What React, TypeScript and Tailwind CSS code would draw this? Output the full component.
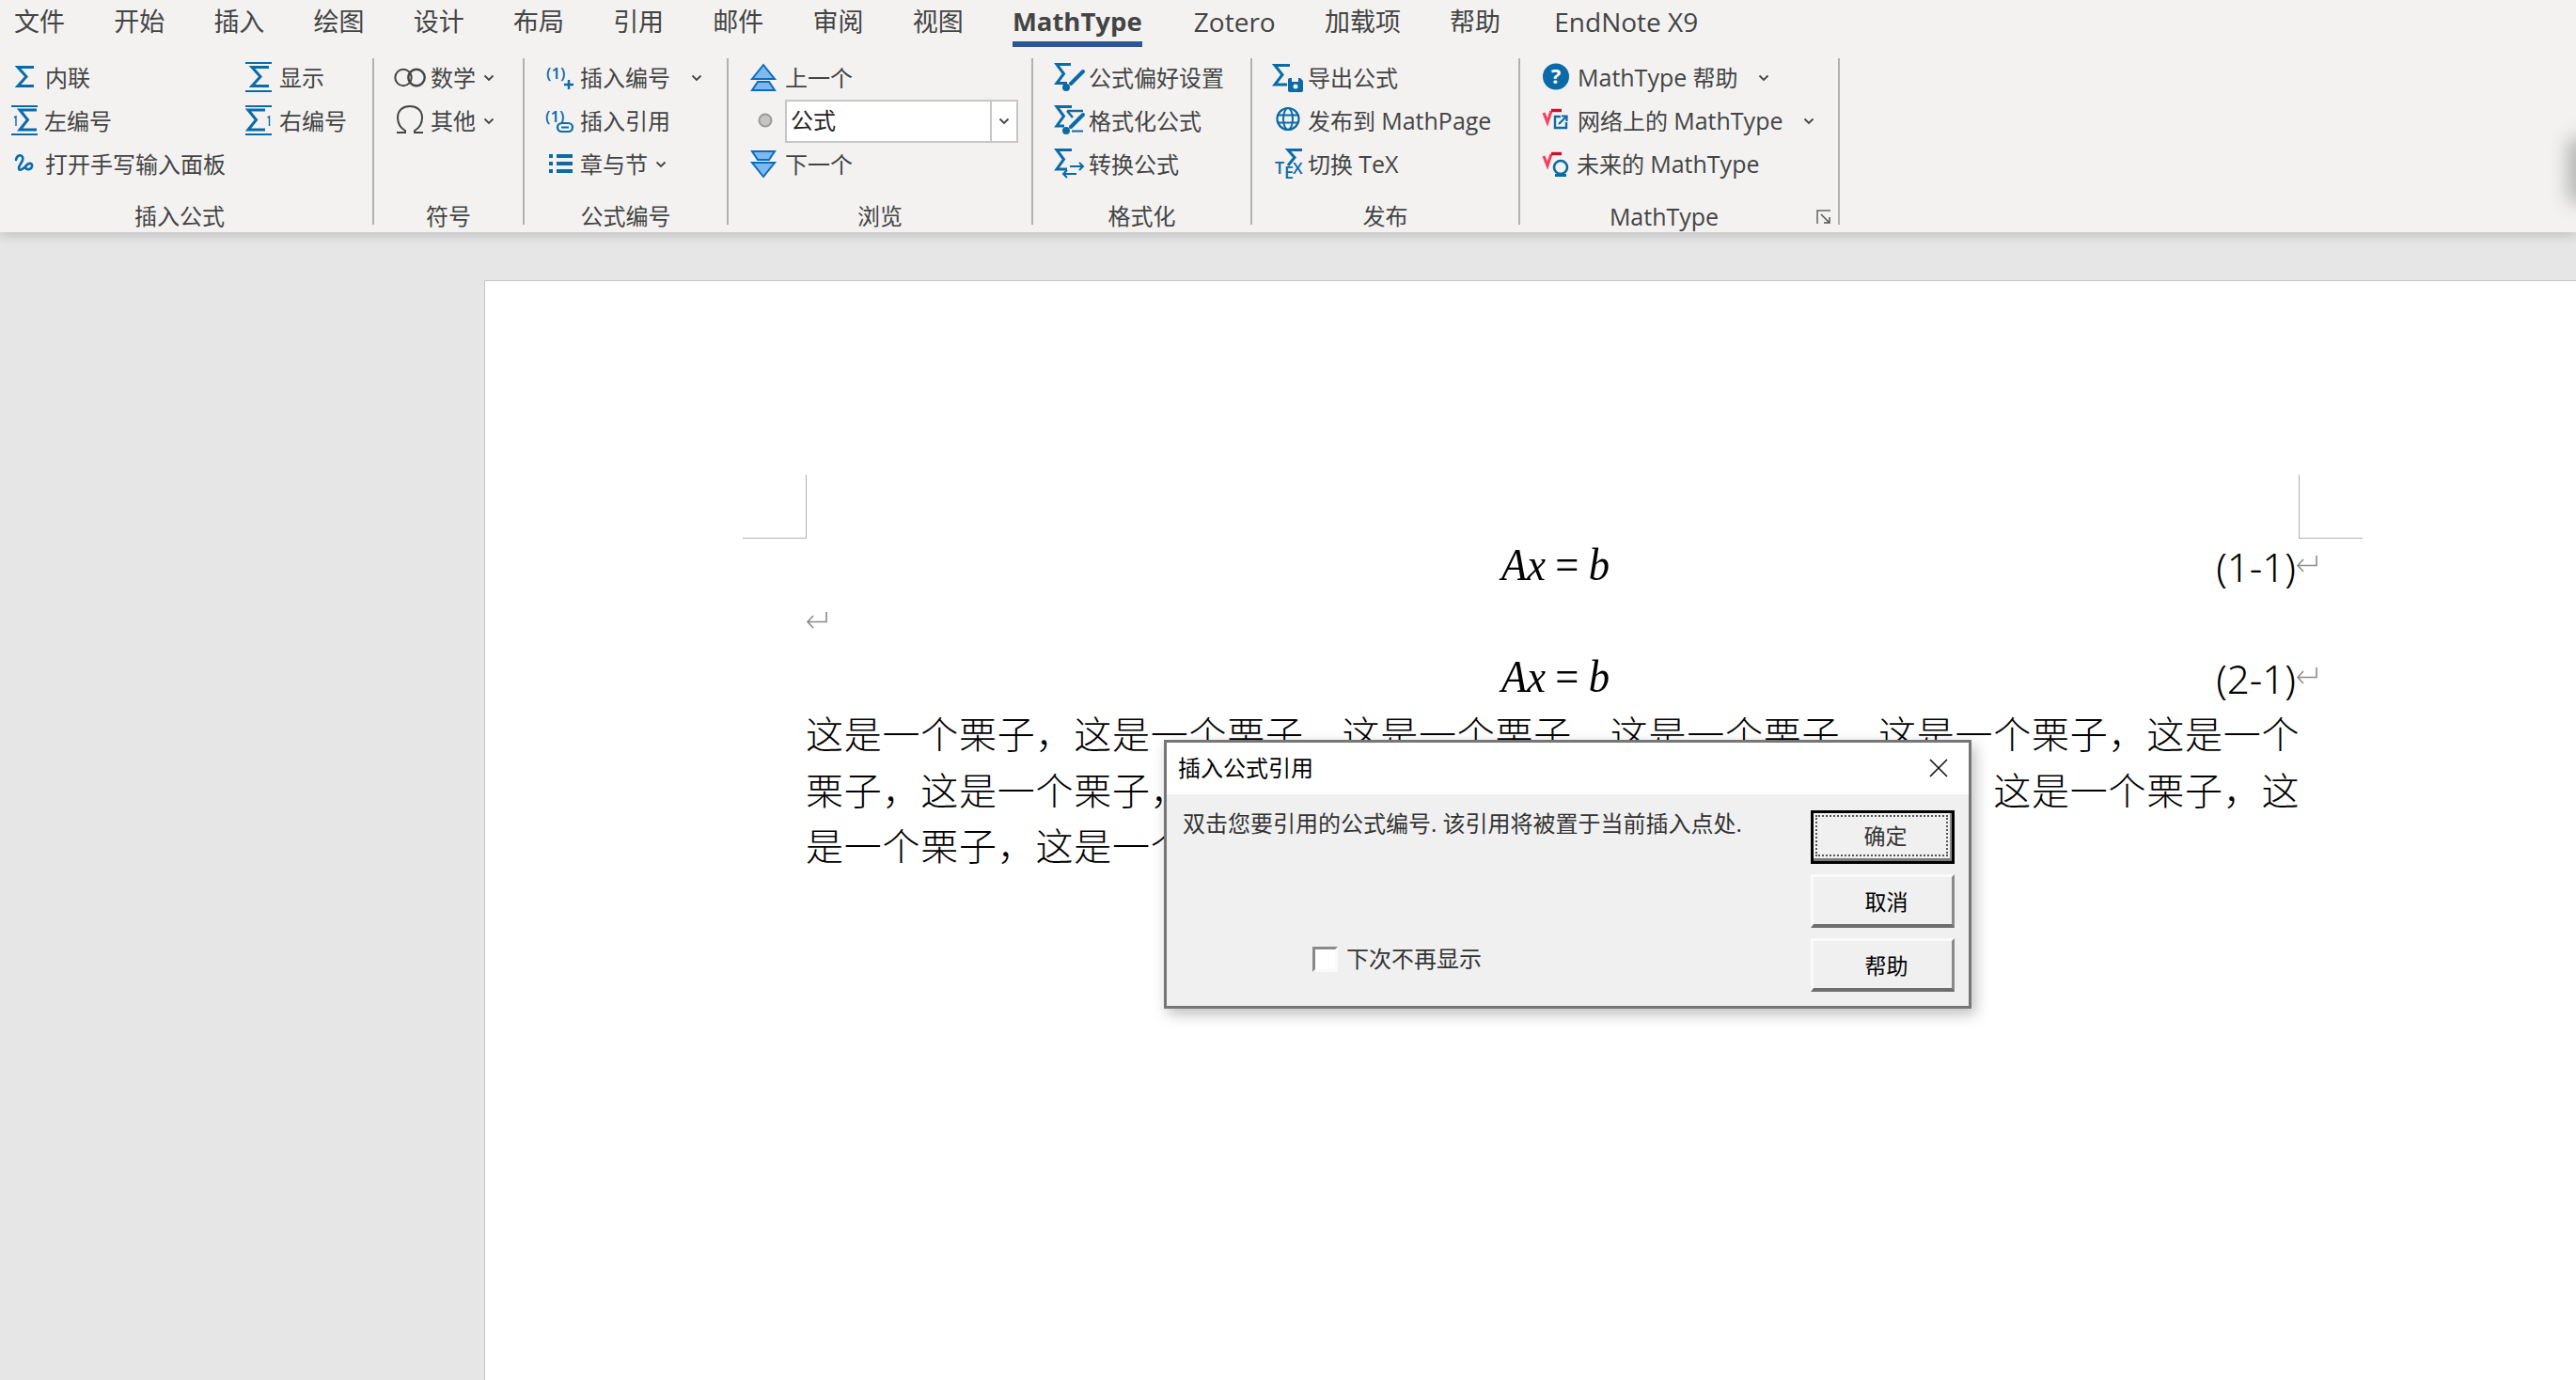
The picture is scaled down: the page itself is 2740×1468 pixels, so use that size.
import type { ReactNode } from "react";

const BLUE = "#0c6ba6";
const TABS = ["文件", "开始", "插入", "绘图", "设计", "布局", "引用", "邮件", "审阅", "视图", "MathType", "Zotero", "加载项", "帮助", "EndNote X9"];

const tabClass = (tab: string) => {
  if (tab === "MathType") return "mr-[3px] text-[27.5px] font-bold";
  if (tab === "Zotero" || tab === "EndNote X9") return "text-[28px]";
  if (tab === "帮助") return "mr-[5px]";
  return "";
};

const Chevron = ({ className = "" }: { className?: string }) => (
  <svg width="12" height="8" viewBox="0 0 12 8" className={className}>
    <path d="M1.5 1.5L6 6L10.5 1.5" fill="none" stroke="#444" strokeWidth="1.8" />
  </svg>
);

const Icon = ({ w, children }: { w: number; children: ReactNode }) => (
  <svg width={w} height="46" viewBox={`0 0 ${w} 46`} className="shrink-0" fill="none">
    {children}
  </svg>
);

const Sigma = ({ d }: { d: string }) => <path d={d} stroke={BLUE} strokeWidth="3" fill="none" />;
const Bar = ({ x, y, w }: { x: number; y: number; w: number }) => <rect x={x} y={y} width={w} height="2" fill={BLUE} />;
const Num = ({ x, y, size = 14, t }: { x: number; y: number; size?: number; t: string }) => (
  <text x={x} y={y} fontSize={size} fontWeight="600" fill={BLUE} fontFamily="Open Sans, sans-serif">
    {t}
  </text>
);

const Latin = ({ children }: { children: ReactNode }) => <span className="text-[25px]">{children}</span>;

const Item = ({ icon, label }: { icon: ReactNode; label: ReactNode }) => (
  <div className="flex h-[46px] items-center whitespace-nowrap">
    {icon}
    <span>{label}</span>
  </div>
);

const ChevronItem = ({ icon, label, gap }: { icon: ReactNode; label: ReactNode; gap: number }) => (
  <div className="flex h-[46px] items-center whitespace-nowrap">
    {icon}
    <span style={{ marginRight: gap }}>{label}</span>
    <Chevron className="shrink-0" />
  </div>
);

const Group = ({ w, label, labelClass = "", children, launcher }: { w: number; label: ReactNode; labelClass?: string; children: ReactNode; launcher?: boolean }) => (
  <div className="shrink-0" style={{ width: w }}>
    <div className="h-[138px]">{children}</div>
    <div className={`relative mt-[15px] text-center leading-[34px] ${labelClass}`}>
      {label}
      {launcher && (
        <svg width="16" height="16" viewBox="0 0 16 16" className="absolute top-[10px] right-[7px]" fill="none">
          <path d="M1 15V1H15" stroke="#666" strokeWidth="1.5" />
          <path d="M5 5L14 14M14 8V14H8" stroke="#555" strokeWidth="1.5" />
        </svg>
      )}
    </div>
  </div>
);

const Sep = () => <div className="mt-[2px] h-[177px] w-[2px] shrink-0 bg-[#b3b0ad]" />;

const Pilcrow = () => (
  <svg width="24" height="22" viewBox="0 0 24 22" fill="none" className="shrink-0">
    <path d="M22 1V11.5H2M8 5L2 11.5L8 18" stroke="#8a8a8a" strokeWidth="1.6" />
  </svg>
);

const Equation = () => (
  <span className="inline-block origin-left scale-x-[0.93] font-['Liberation_Serif',serif] text-[48px] leading-none text-black">
    <i>Ax</i>
    <span className="ml-[11px]">=</span>
    <i className="ml-[11px]">b</i>
  </span>
);

const EquationRow = ({ n }: { n: string }) => (
  <div className="flex h-[60px] w-[1609px] items-center">
    <div className="ml-[740px]">
      <Equation />
    </div>
    <span className="mt-[3px] ml-auto font-['Noto_Sans',sans-serif] text-[42px] leading-none font-light text-black">{n}</span>
    <Pilcrow />
  </div>
);

const DialogButton = ({ label, primary }: { label: string; primary?: boolean }) =>
  primary ? (
    <div className="h-[57px] w-[153px] border-[3px] border-black bg-[#f0f0f0]">
      <div className="h-full border-r-[2px] border-b-[3px] border-r-[#8a8a8a] border-b-[#7a7a7a] p-[2px]">
        <div className="flex h-full items-center justify-center border-2 border-dotted border-[#555] pl-[8px] text-[23px] text-[#333]">{label}</div>
      </div>
    </div>
  ) : (
    <div className="flex h-[57px] w-[153px] items-center justify-center border-t-[3px] border-r-[3px] border-b-[4px] border-l-[3px] border-t-[#fafafa] border-r-[#8a8a8a] border-b-[#6e6e6e] border-l-[#fafafa] bg-[#f0f0f0] pt-[3px] pl-[8px] text-[23px] text-black">
      {label}
    </div>
  );

export default function App() {
  return (
    <div className="relative flex h-[1468px] w-[2740px] flex-col overflow-hidden bg-[#e6e6e6] font-['Open_Sans','Noto_Sans_CJK_SC',sans-serif] text-[24px] text-[#444]">
      <div className="relative z-10 h-[247px] shrink-0 bg-[#f3f2f1] shadow-[0_3px_12px_rgba(0,0,0,0.18)]">
        <div className="flex h-[60px] items-start gap-[52.2px] pt-[3px] pl-[15px] text-[27px]">
          {TABS.map((tab) => (
            <div key={tab} className={`flex flex-col whitespace-nowrap ${tabClass(tab)}`}>
              <span className="h-[41px] leading-[40px]">{tab}</span>
              {tab === "MathType" && <div className="h-[6px] bg-[#2b579a]" />}
            </div>
          ))}
        </div>

        <div className="flex">
          <Group w={396} label="插入公式" labelClass="pr-[14px]">
            <div className="flex">
              <div className="w-[261px] shrink-0">
                <Item label="内联" icon={<Icon w={48}><Sigma d="M36 11.5H19L28 21.5L19 31.5H36" /></Icon>} />
                <Item
                  label="左编号"
                  icon={
                    <Icon w={47}>
                      <Bar x={12} y={6} w={28} />
                      <Bar x={12} y={36} w={28} />
                      <Sigma d="M39 11H21L29.5 21.5L21 32H39" />
                      <path d="M15 19L17 18V28" stroke={BLUE} strokeWidth="1.4" />
                    </Icon>
                  }
                />
              </div>
              <div>
                <Item
                  label="显示"
                  icon={
                    <Icon w={36}>
                      <Bar x={0} y={6} w={28} />
                      <Bar x={0} y={36} w={28} />
                      <Sigma d="M25 11.5H7L16 21.5L7 31.5H25" />
                    </Icon>
                  }
                />
                <Item
                  label="右编号"
                  icon={
                    <Icon w={36}>
                      <Bar x={0} y={6} w={28} />
                      <Bar x={0} y={36} w={28} />
                      <Sigma d="M21 11H3L11.5 21.5L3 32H21" />
                      <path d="M23.5 19L25.5 18V28" stroke={BLUE} strokeWidth="1.4" />
                    </Icon>
                  }
                />
              </div>
            </div>
            <Item
              label="打开手写输入面板"
              icon={
                <Icon w={48}>
                  <path d="M17 18C18 13 22 12 24 15C26 19 20 23 20 27C20 31 26 27 28 24C30 21 35 21 34 25C33 29 28 29 27 26" stroke={BLUE} strokeWidth="2.6" strokeLinecap="round" />
                </Icon>
              }
            />
          </Group>
          <Sep />

          <Group w={158} label="符号">
            <ChevronItem
              label="数学"
              gap={8}
              icon={
                <Icon w={60}>
                  <circle cx="31" cy="22.5" r="8.7" stroke="#444" strokeWidth="2" />
                  <circle cx="45" cy="22.5" r="8.7" stroke="#444" strokeWidth="2.4" />
                </Icon>
              }
            />
            <ChevronItem
              label="其他"
              gap={8}
              icon={
                <Icon w={60}>
                  <path d="M24 35H33V33C28 30 25 25 25 19C25 11 31 7 38 7C45 7 51 11 51 19C51 25 48 30 43 33V35H52" stroke="#444" strokeWidth="2" />
                </Icon>
              }
            />
          </Group>
          <Sep />

          <Group w={215} label="公式编号">
            <ChevronItem
              label="插入编号"
              gap={22}
              icon={
                <Icon w={59}>
                  <Num x={23} y={24} size={17} t="(1)" />
                  <path d="M42 30H52M47 25V35" stroke={BLUE} strokeWidth="2.4" />
                </Icon>
              }
            />
            <Item
              label="插入引用"
              icon={
                <Icon w={59}>
                  <Num x={22} y={24} size={17} t="(1)" />
                  <rect x="35" y="25" width="16" height="9" rx="4.5" stroke={BLUE} strokeWidth="2.2" />
                  <path d="M39 29.5H47" stroke={BLUE} strokeWidth="2" />
                </Icon>
              }
            />
            <ChevronItem
              label="章与节"
              gap={8}
              icon={
                <Icon w={59}>
                  <path d="M26 12H30V16H26ZM26 20H30V24H26ZM26 28H30V32H26ZM34 12H51V16H34ZM34 20H51V24H34ZM34 28H51V32H34Z" fill={BLUE} />
                </Icon>
              }
            />
          </Group>
          <Sep />

          <Group w={322} label="浏览">
            <Item
              label="上一个"
              icon={
                <Icon w={60}>
                  <path d="M37 9L49 24H25Z" fill="#7fb8ec" stroke="#0b6cbd" strokeWidth="2" />
                  <path d="M31 27H43L49 36H25Z" fill="#7fb8ec" stroke="#0b6cbd" strokeWidth="2" />
                </Icon>
              }
            />
            <div className="flex h-[46px] items-center">
              <Icon w={60}>
                <circle cx="39" cy="22" r="6.5" fill="#c4c4c4" stroke="#999" strokeWidth="2" />
              </Icon>
              <div className="flex h-[46px] w-[248px] border-2 border-[#c6c6c6] bg-white text-[#222]">
                <span className="flex-1 pl-[4px] leading-[40px]">公式</span>
                <div className="flex w-[28px] items-center justify-center border-l-2 border-[#c6c6c6]">
                  <Chevron />
                </div>
              </div>
            </div>
            <Item
              label="下一个"
              icon={
                <Icon w={60}>
                  <path d="M25 9H49L43 18H31Z" fill="#7fb8ec" stroke="#0b6cbd" strokeWidth="2" />
                  <path d="M25 21H49L37 36Z" fill="#7fb8ec" stroke="#0b6cbd" strokeWidth="2" />
                </Icon>
              }
            />
          </Group>
          <Sep />

          <Group w={231} label="格式化">
            <Item
              label="公式偏好设置"
              icon={
                <Icon w={59}>
                  <Sigma d="M40 8.5H25L32.5 18.5L25 28.5H36" />
                  <path d="M53 16L40 29" stroke={BLUE} strokeWidth="4" strokeLinecap="round" />
                  <circle cx="35" cy="33" r="4" fill={BLUE} />
                </Icon>
              }
            />
            <Item
              label="格式化公式"
              icon={
                <Icon w={59}>
                  <Sigma d="M41 7.5H25L32.5 17.5L25 28H33" />
                  <path d="M36 12H53M36 12L42 19" stroke={BLUE} strokeWidth="2.5" />
                  <path d="M53 16L40 29" stroke={BLUE} strokeWidth="4" strokeLinecap="round" />
                  <circle cx="35" cy="33" r="4" fill={BLUE} />
                  <path d="M41 33.5H53" stroke={BLUE} strokeWidth="2" />
                </Icon>
              }
            />
            <Item
              label="转换公式"
              icon={
                <Icon w={59}>
                  <Sigma d="M41 7.5H25L32.5 17.5L25 28H36" />
                  <path d="M39 25H53M49 21L53 25L49 29M46 33H32M36 29L32 33L36 37" stroke={BLUE} strokeWidth="2" />
                </Icon>
              }
            />
          </Group>
          <Sep />

          <Group w={283} label="发布">
            <Item
              label="导出公式"
              icon={
                <Icon w={59}>
                  <Sigma d="M40 9.5H24L32 19.5L24 30H37" />
                  <path d="M38 25C38 23.5 39 23 40 23H51L54 26V36C54 37.5 53 38 52 38H40C39 38 38 37.5 38 36Z" fill={BLUE} />
                  <path d="M42 23H49V27H42Z" fill="#f3f2f1" />
                  <circle cx="46" cy="32" r="2.5" fill="#f3f2f1" />
                </Icon>
              }
            />
            <Item
              label={<>发布到 <Latin>MathPage</Latin></>}
              icon={
                <Icon w={59}>
                  <circle cx="38" cy="20.5" r="11.5" stroke={BLUE} strokeWidth="2.2" />
                  <ellipse cx="38" cy="20.5" rx="5" ry="11.5" stroke={BLUE} strokeWidth="2" />
                  <path d="M27 16.5H49M27 24.5H49" stroke={BLUE} strokeWidth="2" />
                </Icon>
              }
            />
            <Item
              label={<>切换 <Latin>TeX</Latin></>}
              icon={
                <Icon w={59}>
                  <Sigma d="M53 7.5H38L45 15.5L38 24" />
                  <Num x={24} y={33} size={18} t="T" />
                  <Num x={34} y={38} size={18} t="E" />
                  <Num x={43} y={33} size={17} t="X" />
                </Icon>
              }
            />
          </Group>
          <Sep />

          <Group w={338} label={<Latin>MathType</Latin>} labelClass="pr-[32px]" launcher>
            <ChevronItem
              label={<><Latin>MathType</Latin> 帮助</>}
              gap={22}
              icon={
                <Icon w={61}>
                  <circle cx="38" cy="21.5" r="14" fill={BLUE} />
                  <text x="38" y="29" textAnchor="middle" fontSize="22" fontWeight="700" fill="#fff" fontFamily="Open Sans, sans-serif">?</text>
                </Icon>
              }
            />
            <ChevronItem
              label={<>网络上的 <Latin>MathType</Latin></>}
              gap={22}
              icon={
                <Icon w={61}>
                  <path d="M25 14L29 24L33 12" stroke="#ef4560" strokeWidth="3.2" />
                  <path d="M33 11.5H44" stroke="#c8102e" strokeWidth="3.4" />
                  <path d="M43 18H37V30H49V24" stroke={BLUE} strokeWidth="2.4" />
                  <path d="M41 26L49 18M44 17.5H49.5V23" stroke={BLUE} strokeWidth="2.2" />
                </Icon>
              }
            />
            <Item
              label={<>未来的 <Latin>MathType</Latin></>}
              icon={
                <Icon w={60}>
                  <path d="M25 14L29 24L33 12" stroke="#ef4560" strokeWidth="3.2" />
                  <path d="M33 11.5H44" stroke="#c8102e" strokeWidth="3.4" />
                  <circle cx="43" cy="26" r="7" stroke={BLUE} strokeWidth="2.6" />
                  <path d="M37 34.5H49" stroke={BLUE} strokeWidth="3" />
                </Icon>
              }
            />
          </Group>
          <Sep />
        </div>

        <div className="absolute top-[145px] right-[-16px] h-[72px] w-[24px] rounded-full bg-[#b0b0b0] blur-[10px]" />
      </div>

      <div className="relative mt-[51px] ml-[515px] flex-1 border-t border-l border-[#c6c6c6] bg-white pt-[272px] pl-[341px]">
        <div className="absolute top-[206px] left-[274px] h-[68px] w-[68px] border-r border-b border-[#b0b0b0]" />
        <div className="absolute top-[206px] left-[1929px] h-[68px] w-[68px] border-b border-l border-[#b0b0b0]" />

        <EquationRow n="(1-1)" />
        <div className="flex h-[59px] items-center">
          <Pilcrow />
        </div>
        <EquationRow n="(2-1)" />
        <p className="w-[1592px] font-['Noto_Sans_CJK_SC',sans-serif] text-[40px] leading-[59.5px] font-light tracking-[0.75px] text-black">
          这是一个栗子，这是一个栗子，这是一个栗子，这是一个栗子，这是一个栗子，这是一个栗子，这是一个栗子，这是一个栗子，这是一个栗子，这是一个栗子，这是一个栗子，这是一个栗子，这是一个栗子，这是一个栗子，
        </p>
      </div>

      <div className="absolute top-[787px] left-[1238px] z-20 flex h-[286px] w-[859px] flex-col border-[3px] border-[#767676] bg-[#f0f0f0] shadow-[4px_6px_14px_rgba(0,0,0,0.25)]">
        <div className="flex h-[55px] shrink-0 items-center justify-between bg-white pr-[22px] pb-[2px] pl-[12px] text-black">
          <span>插入公式引用</span>
          <svg width="20" height="20" viewBox="0 0 20 20" fill="none">
            <path d="M1 1L19 19M19 1L1 19" stroke="#111" strokeWidth="1.6" />
          </svg>
        </div>
        <div className="flex flex-1 pt-[17px] pr-[15px] pl-[17px]">
          <div className="flex-1 text-[#333]">
            <div className="h-[30px] leading-[28px] whitespace-nowrap">双击您要引用的公式编号. 该引用将被置于当前插入点处.</div>
            <div className="mt-[110px] ml-[138px] flex items-center gap-[9px]">
              <div className="h-[27px] w-[27px] border-[3px] border-t-[#8a8a8a] border-r-[#fafafa] border-b-[#fafafa] border-l-[#8a8a8a] bg-white" />
              <span>下次不再显示</span>
            </div>
          </div>
          <div className="flex w-[153px] flex-col gap-[11px]">
            <DialogButton label="确定" primary />
            <DialogButton label="取消" />
            <DialogButton label="帮助" />
          </div>
        </div>
      </div>
    </div>
  );
}
